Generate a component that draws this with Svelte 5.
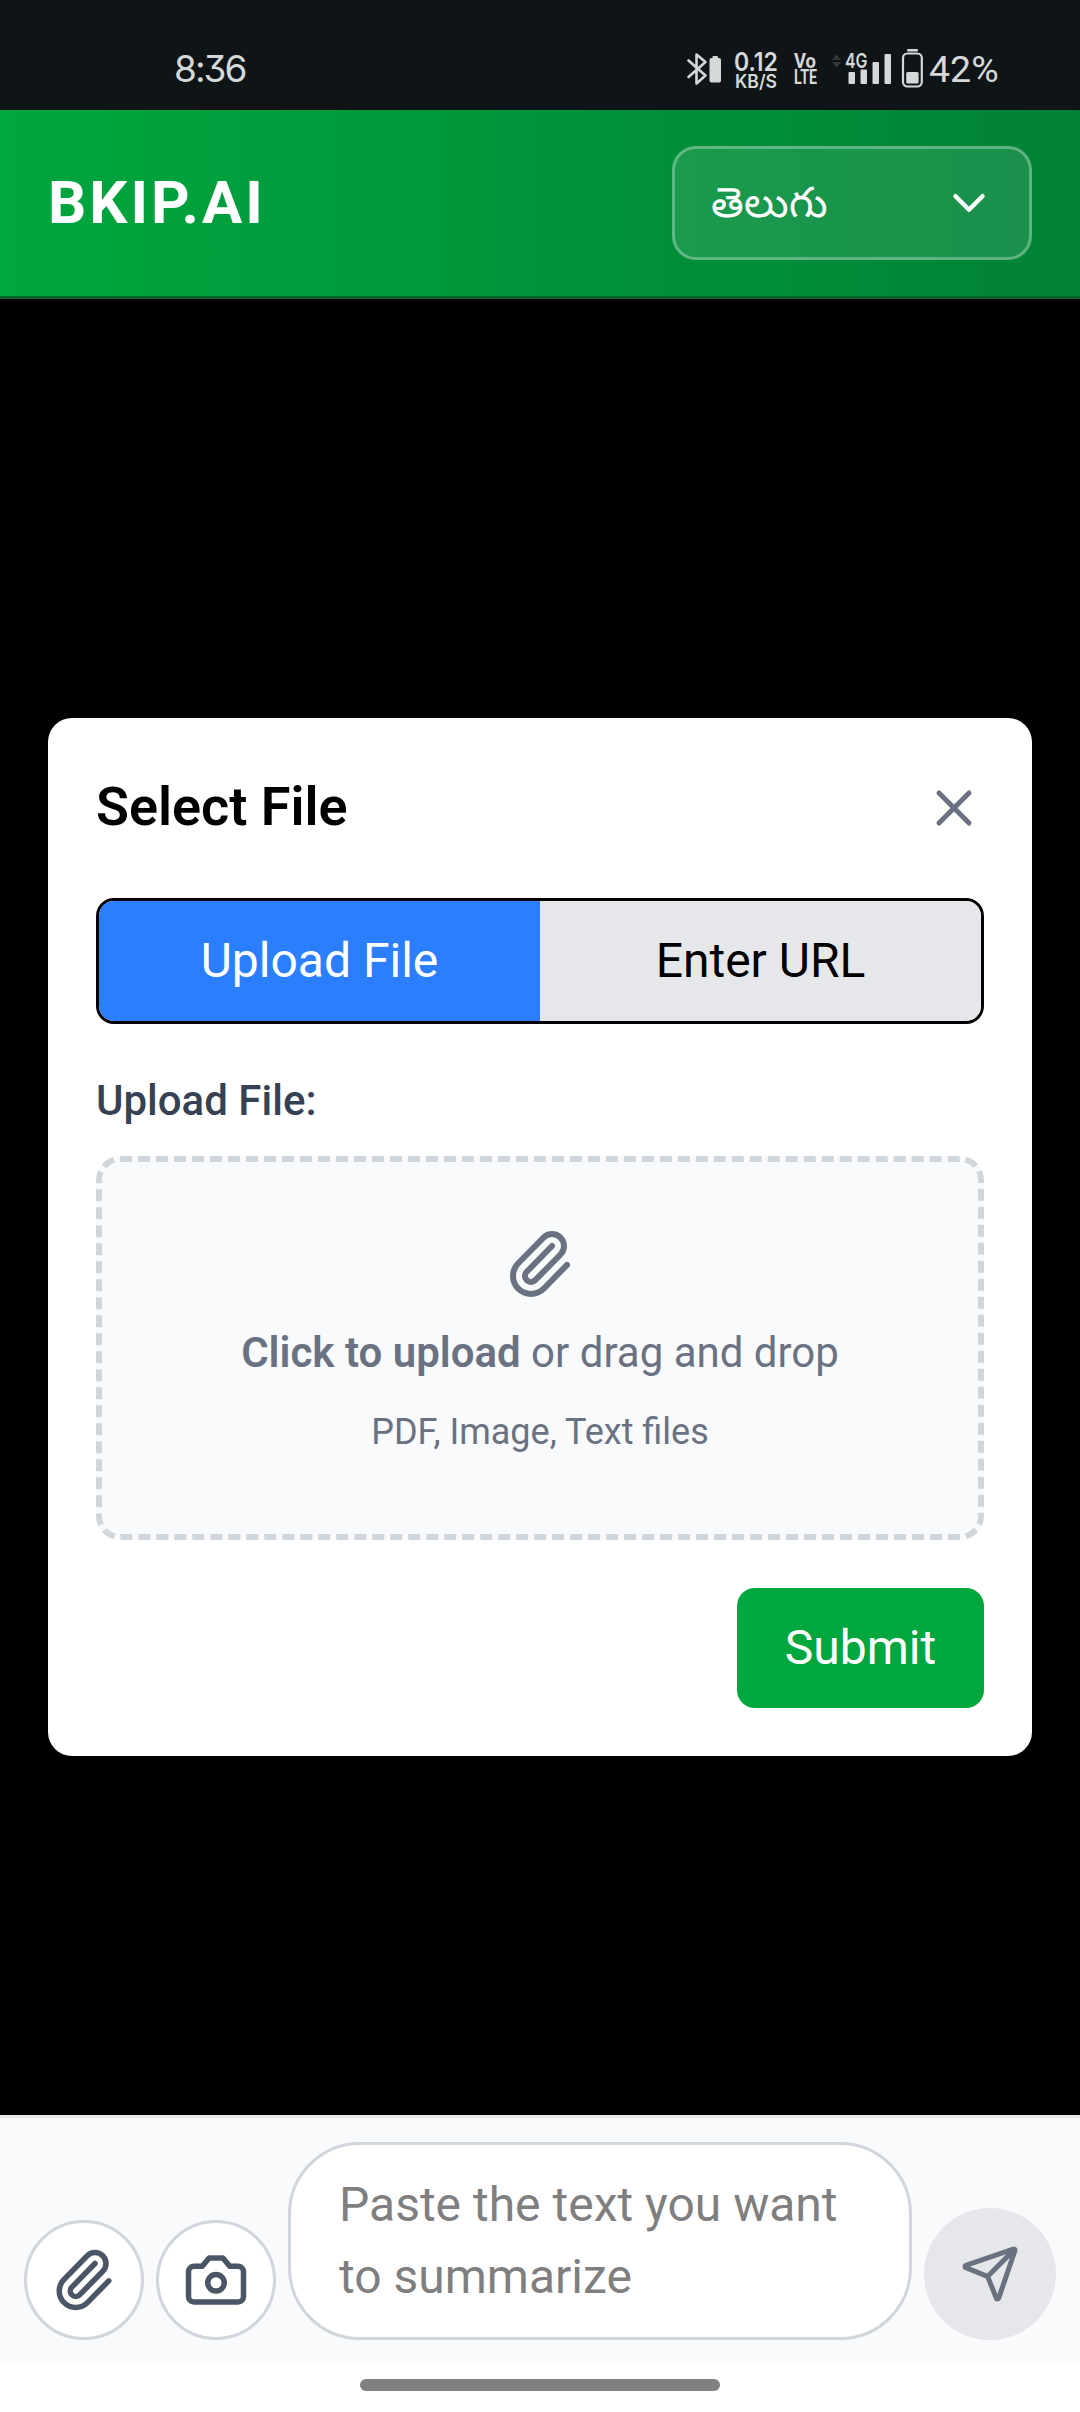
<script>
  let mode = $state('file');
  let text = $state('');
  const clip = 'M13.234 20.252 21 12.300M16 6l-8.414 8.586a2 2 0 0 0 0 2.828 2 2 0 0 0 2.828 0l8.414-8.586a4 4 0 0 0 0-5.656 4 4 0 0 0-5.656 0l-8.415 8.585a6 6 0 1 0 8.486 8.486';
</script>

<div class="screen">
  <div class="status">
    <span class="time">8:36</span>
    <div class="tray">
      <svg class="bt" width="34" height="44" viewBox="0 0 34 44">
        <path d="M1.500 14.500 18.500 29.500 9.500 37.500V8.500L18.500 16 1.500 31" fill="none" stroke="currentColor" stroke-width="2.600" stroke-linejoin="round" stroke-linecap="round" />
        <rect x="22.500" y="12" width="11.500" height="24.500" rx="2" fill="currentColor" />
        <rect x="25.500" y="10" width="5.500" height="4" rx="1" fill="currentColor" />
      </svg>
      <svg class="net" width="44" height="44" viewBox="0 0 44 44">
        <text x="0" y="25" font-size="25.500" font-weight="600" textLength="44" lengthAdjust="spacingAndGlyphs">0.12</text>
        <text x="1" y="42" font-size="18.500" font-weight="600" textLength="42" lengthAdjust="spacingAndGlyphs">KB/S</text>
      </svg>
      <svg class="volte" width="23" height="44" viewBox="0 0 23 44">
        <text x="0" y="21.500" textLength="22" lengthAdjust="spacingAndGlyphs">Vo</text>
        <text x="0" y="38" textLength="23" lengthAdjust="spacingAndGlyphs">LTE</text>
      </svg>
      <svg class="signal" width="60" height="44" viewBox="0 0 60 44">
        <path d="M0 14 4.500 8.500 9 14zM0 16h9l-4.500 5.500z" fill="#33383a" />
        <text x="13" y="21.500" font-size="20" textLength="22.500" lengthAdjust="spacingAndGlyphs">4G</text>
        <rect x="16.500" y="26" width="6.500" height="12" rx="1" /><rect x="28.500" y="23.500" width="6.500" height="14.500" rx="1" />
        <rect x="40.500" y="16" width="6.500" height="22" rx="1" /><rect x="52.500" y="8" width="6.500" height="30" rx="1" />
      </svg>
      <svg class="battery" width="21" height="44" viewBox="0 0 21 44">
        <rect x="5" y="3" width="11" height="2.400" rx="1.200" fill="currentColor" />
        <rect x="1" y="7.500" width="18.800" height="33" rx="4.500" fill="none" stroke="currentColor" stroke-width="2.200" />
        <rect x="4.200" y="26" width="12.400" height="11.500" rx="1.500" fill="currentColor" />
      </svg>
      <span class="pct">42%</span>
    </div>
  </div>

  <header>
    <h1>BKIP.AI</h1>
    <button class="lang">
      <span>తెలుగు</span>
      <svg width="54" height="54" viewBox="0 0 24 24"><path d="m6 9 6 6 6-6" /></svg>
    </button>
  </header>

  <main>
    <section class="modal">
      <div class="head">
        <h2>Select File</h2>
        <button class="close" aria-label="Close">
          <svg width="60" height="60" viewBox="0 0 24 24"><path d="M18 6 6 18M6 6l12 12" /></svg>
        </button>
      </div>
      <div class="tabs">
        <button class:active={mode === 'file'} onclick={() => (mode = 'file')}>Upload File</button>
        <button class:active={mode === 'url'} onclick={() => (mode = 'url')}>Enter URL</button>
      </div>
      <p class="label">Upload File:</p>
      <div class="drop">
        <svg width="72" height="72" viewBox="0 0 24 24"><path d={clip} /></svg>
        <p class="hint"><strong>Click to upload</strong> or drag and drop</p>
        <p class="types">PDF, Image, Text files</p>
      </div>
      <button class="submit">Submit</button>
    </section>
  </main>

  <footer>
    <button class="round" aria-label="Attach">
      <svg width="66" height="66" viewBox="0 0 24 24"><path d={clip} /></svg>
    </button>
    <button class="round" aria-label="Camera">
      <svg width="66" height="66" viewBox="0 0 24 24"><path d="M14.500 4h-5L7 7H4a2 2 0 0 0-2 2v9a2 2 0 0 0 2 2h16a2 2 0 0 0 2-2V9a2 2 0 0 0-2-2h-3l-2.500-3z" /><circle cx="12" cy="13" r="3" /></svg>
    </button>
    <textarea placeholder="Paste the text you want to summarize" bind:value={text}></textarea>
    <button class="send" aria-label="Send">
      <svg width="60" height="60" viewBox="0 0 24 24"><path d="M14.536 21.686a.5.5 0 0 0 .937-.024l6.500-19a.496.496 0 0 0-.635-.635l-19 6.500a.5.5 0 0 0-.024.937l7.930 3.180a2 2 0 0 1 1.112 1.110zM21.854 2.147l-10.940 10.939" /></svg>
    </button>
  </footer>
  <div class="nav"><div class="pill"></div></div>
</div>

<style>
  :global(body) { margin: 0; background: #000; }
  * { box-sizing: border-box; }
  h1, h2, p { margin: 0; }
  button { font: inherit; color: inherit; border: 0; padding: 0; background: none; }
  svg { display: block; flex: none; }
  .screen {
    width: 1080px; height: 2412px; display: flex; flex-direction: column;
    background: #000; font: 400 48px/72px Roboto, sans-serif; overflow: hidden;
  }
  header svg, main svg, footer svg {
    fill: none; stroke: currentColor; stroke-width: 2; stroke-linecap: round; stroke-linejoin: round;
  }

  .status {
    height: 110px; flex: none; background: #0f1416; color: #d5d8d9; display: flex;
    justify-content: space-between; padding: 46px 80px 0 174px; font-family: Inter, Roboto, sans-serif;
  }
  .time { font-size: 37px; line-height: 46px; letter-spacing: -2px; font-feature-settings: 'cv09'; }
  .tray { display: flex; height: 44px; }
  .tray svg { overflow: visible; }
  .tray text { fill: currentColor; }
  .bt { margin-right: 13px; }
  .net { margin-right: 16px; }
  .volte { margin-right: 15px; font: 700 20.500px Roboto, sans-serif; }
  .signal { margin-right: 10px; fill: currentColor; font-weight: 600; }
  .battery { margin-right: 6px; }
  .pct { width: 71px; font: 400 37.500px/46px Roboto, sans-serif; white-space: nowrap; }

  header {
    height: 189px; flex: none; padding: 0 48px; display: flex; align-items: center; justify-content: space-between;
    color: #fff; border-bottom: 3px solid #0d632f; background: linear-gradient(90deg, #00a63e, #008236) border-box;
  }
  h1 { font-size: 60px; line-height: 84px; font-weight: 700; letter-spacing: 3px; }
  .lang {
    width: 360px; height: 114px; padding: 0 33px 0 36px; display: flex; align-items: center; justify-content: space-between;
    border: 3px solid rgb(255 255 255 / 30%); border-radius: 24px; background: rgb(255 255 255 / 10%);
    font-size: 42px; font-weight: 500; line-height: 60px;
  }

  main { flex: 1; display: flex; flex-direction: column; padding: 419px 48px 0; }
  .modal { height: 1038px; background: #fff; border-radius: 24px; padding: 48px; display: flex; flex-direction: column; }
  .head { height: 84px; display: flex; align-items: center; justify-content: space-between; margin-bottom: 48px; }
  h2 { font-size: 54px; line-height: 82px; padding-bottom: 2px; font-weight: 600; }
  .close { color: #6a7282; }
  .tabs { height: 126px; display: flex; border: 3px solid #000; border-radius: 18px; overflow: hidden; }
  .tabs button { flex: 1; background: #e5e7eb; color: #000; }
  .tabs .active { background: #2b7fff; color: #fff; }
  .label { margin: 47px 0 25px; font-size: 42px; line-height: 60px; font-weight: 500; color: #364153; }
  .drop {
    height: 384px; border: 6px dashed #d1d5dc; border-radius: 24px; background: #f9fafb; color: #6a7282;
    display: flex; flex-direction: column; align-items: center; padding-top: 66px;
  }
  .hint { margin-top: 23px; font-size: 42px; line-height: 60px; }
  .hint strong { font-weight: 600; }
  .types { margin-top: 25px; font-size: 36px; line-height: 48px; }
  .submit { align-self: flex-end; width: 247px; height: 120px; margin-top: 48px; border-radius: 18px; background: #00a63e; color: #fff; }

  footer {
    height: 248px; flex: none; padding: 24px 24px 23px; border-top: 3px solid #e5e7eb; background: #f9fafb;
    display: flex; align-items: flex-end; gap: 12px;
  }
  footer button { display: grid; place-items: center; flex: none; border-radius: 50%; }
  .round { width: 120px; height: 120px; border: 3px solid #d1d5dc; background: #fff; color: #4a5565; }
  textarea {
    flex: 1; min-width: 0; height: 198px; padding: 24px 48px; border: 3px solid #d1d5dc; border-radius: 72px;
    background: #fff; font: inherit; resize: none; outline: none; overflow: hidden;
  }
  textarea::placeholder { color: #7f7f7f; opacity: 1; }
  .send { width: 132px; height: 132px; background: #e5e7eb; color: #6a7282; }
  .nav { height: 49px; flex: none; background: #fff; display: flex; justify-content: center; padding-top: 16px; }
  .pill { width: 360px; height: 12px; border-radius: 6px; background: #808080; }
</style>
